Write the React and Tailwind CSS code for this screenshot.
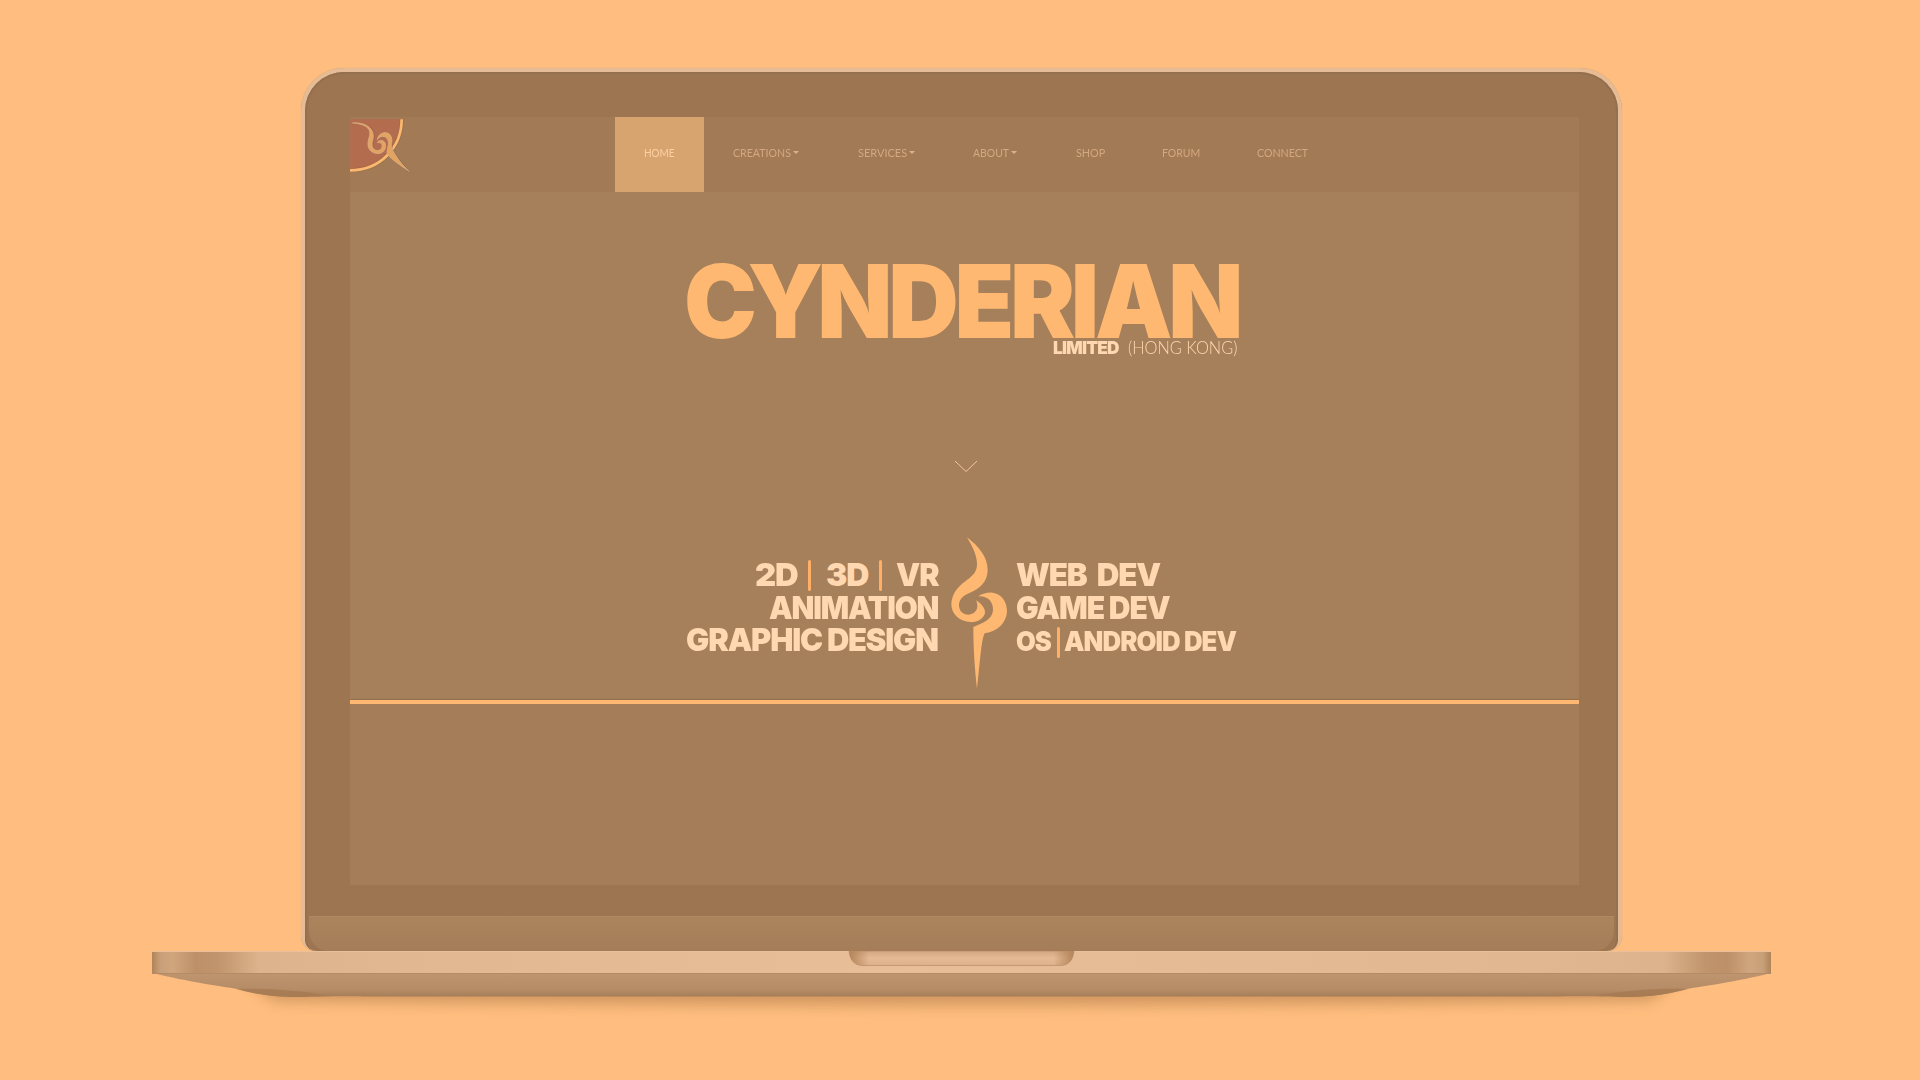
import React, { useLayoutEffect, useRef } from "react";

/* Text stretched horizontally so that its box takes exactly `width` pixels. */
function Fit({ width, className = "", children }) {
  const ref = useRef(null);
  useLayoutEffect(() => {
    const el = ref.current;
    el.style.transform = `scaleX(${width / el.offsetWidth})`;
  }, [width]);
  return (
    <span className="block shrink-0" style={{ width }}>
      <span ref={ref} className={`inline-block origin-left whitespace-pre ${className}`}>
        {children}
      </span>
    </span>
  );
}

function Logo() {
  return (
    <svg className="h-[55px] w-[60px] shrink-0" viewBox="180 170 180 165">
      <path d="M180 177H334C334 262 270 328 180 328Z" fill="#b36c4e" />
      <path d="M335 177C335 262 270 330 180 330" fill="none" stroke="#8f5f3c" strokeWidth="13" opacity=".35" />
      <path d="M335 177C335 262 270 330 180 330" fill="none" stroke="#fbb96f" strokeWidth="8" />
      <g stroke="#8b5738" strokeWidth="6" opacity=".35" fill="none">
        <path d="M187 190C215 183 250 200 252 225C252 240 244 250 250 265C257 276 275 272 279 260M304 234C310 249 300 259 308 274C320 294 340 312 356 334" />
      </g>
      <g fill="#e3a361" stroke="#dbb089" strokeWidth="2" strokeLinejoin="round">
        <path d="M187 188C218 183 250 200 250 225C251 240 242 250 249 263C256 274 273 272 276 260C278 250 272 246 262 247C264 239 279 237 285 247C291 263 282 280 262 280C240 278 232 262 234 246C236 230 243 222 237 208C228 193 205 190 187 188Z" />
        <path d="M262 238C265 214 297 209 304 230C310 245 300 255 308 270C318 290 336 312 357 333C334 316 306 300 291 280C289 268 300 250 293 238C287 225 270 225 262 238Z" />
      </g>
    </svg>
  );
}

function Flame() {
  return (
    <svg className="ml-[14px] mr-[8px] mt-[8px] h-[152px] w-[57px] shrink-0" viewBox="65 290 171 456" fill="#ffb871">
      <path d="M113 291C150 320 175 350 175 390C174 425 152 445 120 458C98 467 88 480 89 497C91 515 103 523 118 523C134 522 143 512 144 498C144 491 142 485 141 480C158 492 168 505 167 517C164 534 146 545 124 545C92 545 66 522 66 492C67 462 84 440 106 424C128 408 142 397 143 374C144 346 129 318 113 291Z" />
      <path d="M147 468C160 459 175 456 190 457C216 460 233 484 233 512C232 545 208 573 166 579C155 600 151 680 143 745C137 690 132 630 132 560C160 548 188 540 191 510C192 488 180 467 147 468Z" />
    </svg>
  );
}

const NAV = [
  { label: "CREATIONS", width: 58, caret: true, gap: "ml-[29px]" },
  { label: "SERVICES", width: 49, caret: true, gap: "ml-[58.5px]" },
  { label: "ABOUT", width: 36, caret: true, gap: "ml-[58px]" },
  { label: "SHOP", width: 29, gap: "ml-[59px]" },
  { label: "FORUM", width: 38, gap: "ml-[57px]" },
  { label: "CONNECT", width: 51, gap: "ml-[57.5px]" },
];

function Nav() {
  return (
    <nav className="flex h-[74.5px] shrink-0 bg-[#a27a55] font-['Lato',sans-serif] text-[11.9px] leading-[16px] text-[#d4a881]">
      <Logo />
      <div className="ml-[205px] flex w-[89px] items-center justify-center bg-[#d7a46f] pb-[3px] text-[#fdd0a3]">
        <Fit width={31}>HOME</Fit>
      </div>
      {NAV.map((item) => (
        <div key={item.label} className={`flex items-center pb-[3px] ${item.gap}`}>
          <Fit width={item.width}>{item.label}</Fit>
          {item.caret && (
            <span className="ml-[2px] border-x-[3px] border-t-[3px] border-x-transparent border-t-[#dcb18a]" />
          )}
        </div>
      ))}
    </nav>
  );
}

function Bar() {
  return <span className="h-[31px] w-[3px] shrink-0 rounded-full bg-[#ffb066]" />;
}

function Services() {
  return (
    <div className="mr-[5px] flex h-[171px] justify-center font-['Inter',sans-serif] text-[32px] font-[900] leading-[32.6px] tracking-[-1.2px] text-[#ffd7b0]">
      <div className="mr-[-1px] flex w-[252px] flex-col items-end pt-[30px]">
        <div className="flex h-[32.6px] items-center">
          <Fit width={42}>2D</Fit>
          <span className="w-[11px]" />
          <Bar />
          <span className="w-[15px]" />
          <Fit width={42}>3D</Fit>
          <span className="w-[11px]" />
          <Bar />
          <span className="w-[14px]" />
          <Fit width={42}>VR</Fit>
        </div>
        <Fit width={169}>ANIMATION</Fit>
        <Fit width={252}>GRAPHIC DESIGN</Fit>
      </div>
      <Flame />
      <div className="flex w-[222px] flex-col pt-[30px]">
        <Fit width={144}>WEB  DEV</Fit>
        <Fit width={153}>GAME DEV</Fit>
        <div className="flex h-[36px] items-center text-[27px] tracking-[-1px]">
          <Fit width={35}>OS</Fit>
          <span className="w-[6px]" />
          <Bar />
          <span className="w-[4px]" />
          <Fit width={172}>ANDROID DEV</Fit>
        </div>
      </div>
    </div>
  );
}

function Screen() {
  return (
    <div className="flex h-[768px] w-[1229px] flex-col overflow-hidden bg-[#a6805a]">
      <Nav />
      <div className="flex flex-col pl-[334px] pt-[72.5px]">
        <h1 className="h-[75px] font-['Inter',sans-serif] text-[102px] font-[900] leading-[75px] tracking-[-4.5px] text-[#ffb871]">
          <Fit width={555}><span className="tracking-[-10px]">C</span><span className="tracking-[-6px]">Y</span>NDERIAN</Fit>
        </h1>
        <div className="ml-[369px] mt-[-1px] flex h-[18px] items-center text-[18px] leading-[18px] text-[#ffd7b0]">
          <Fit width={66} className="font-['Inter',sans-serif] font-[900] tracking-[-0.8px]">LIMITED</Fit>
          <span className="w-[9px]" />
          <Fit width={109} className="font-['Lato',sans-serif] font-[300]">(HONG KONG)</Fit>
        </div>
      </div>
      <svg className="ml-[604px] mt-[104px] h-[13px] w-[24px] shrink-0" viewBox="0 0 24 13" fill="none" stroke="#f0c79f" strokeWidth="1">
        <path d="M1 1L12 11.5L23 1" />
      </svg>
      <div className="mt-[56px] w-[1229px]">
        <Services />
      </div>
      <div className="mt-auto h-[187px] shrink-0 border-t-[4px] border-[#ffb871] bg-[#a57d58] shadow-[0_-1px_1px_#94704f]" />
    </div>
  );
}

function Base() {
  return (
    <svg className="h-[80px] w-[1620px]" viewBox="152 951 1620 80">
      <defs>
        <linearGradient id="edge">
          <stop offset="0" stopColor="#b18358" />
          <stop offset=".005" stopColor="#c79f78" />
          <stop offset=".013" stopColor="#d0a67e" />
          <stop offset=".027" stopColor="#bd9068" />
          <stop offset=".04" stopColor="#c0946d" />
          <stop offset=".066" stopColor="#dcb38c" />
          <stop offset=".15" stopColor="#e1b792" />
          <stop offset=".45" stopColor="#e8be98" />
          <stop offset=".85" stopColor="#e1b792" />
          <stop offset=".934" stopColor="#dcb38c" />
          <stop offset=".96" stopColor="#c0946d" />
          <stop offset=".973" stopColor="#bd9068" />
          <stop offset=".987" stopColor="#d0a67e" />
          <stop offset=".995" stopColor="#c79f78" />
          <stop offset="1" stopColor="#b18358" />
        </linearGradient>
        <linearGradient id="under" x2="0" y2="1">
          <stop offset="0" stopColor="#bf956f" />
          <stop offset=".7" stopColor="#b58c66" />
          <stop offset="1" stopColor="#a47c57" />
        </linearGradient>
        <linearGradient id="notch" x2="0" y2="1">
          <stop offset="0" stopColor="#d3a680" />
          <stop offset=".5" stopColor="#e5ba94" />
          <stop offset="1" stopColor="#dcb08a" />
        </linearGradient>
        <linearGradient id="notchSide">
          <stop offset="0" stopColor="#b3845b" />
          <stop offset=".09" stopColor="#b3845b" stopOpacity="0" />
          <stop offset=".91" stopColor="#b3845b" stopOpacity="0" />
          <stop offset="1" stopColor="#b3845b" />
        </linearGradient>
        <filter id="soft" x="-5%" y="-100%" width="110%" height="300%">
          <feGaussianBlur stdDeviation="7" />
        </filter>
      </defs>
      <path d="M240 976H1684L1650 1001Q960 1010 274 1001Z" fill="#c28a55" opacity=".75" filter="url(#soft)" />
      <path d="M153 973H1771C1735 982 1705 986 1686 989C1665 996 1640 997 1620 997C1600 997 1595 996 1560 996.500H364C329 996 324 997 304 997C284 997 259 996 238 989C219 986 189 982 153 973Z" fill="url(#under)" />
      <path d="M236 989C270 988 300 991 325 995C290 999 262 996 236 989ZM1688 989C1654 988 1624 991 1599 995C1634 999 1662 996 1688 989Z" fill="#a67b53" opacity=".8" />
      <path d="M152 951H1771V973H152Z" fill="url(#edge)" />
      <path d="M152 951.500H1771" stroke="#e9c09a" />
      <path d="M152 973.500H1771" stroke="#b58b66" />
      <path d="M849 951H1074C1073 961 1068 965.500 1060 965.500H863C855 965.500 850 961 849 951Z" fill="url(#notch)" />
      <path d="M849 951H1074C1073 961 1068 965.500 1060 965.500H863C855 965.500 850 961 849 951Z" fill="url(#notchSide)" stroke="#b98c65" strokeWidth=".7" />
    </svg>
  );
}

export default function App() {
  return (
    <main className="flex h-[1080px] w-[1920px] flex-col overflow-hidden bg-[#ffbe7f] pt-[68px]">
      <div className="ml-[301px] h-[883px] w-[1321px] shrink-0 rounded-b-[15px] rounded-t-[43px] border-x-[4px] border-t-[4px] border-[#e5bc95] bg-[#9d7550] shadow-[0_0_1px_#c59668]">
        <div className="flex h-full flex-col overflow-hidden rounded-b-[11px] rounded-t-[39px] border-x-[2px] border-t-[2px] border-[#94704e]">
          <div className="ml-[43px] mt-[43px]">
            <Screen />
          </div>
          <div className="mx-[2px] mt-auto h-[35px] rounded-b-[20px] border-t border-[#b18761] bg-linear-to-b from-[#ab835d] to-[#a57d58]" />
        </div>
      </div>
      <div className="relative ml-[152px]">
        <Base />
      </div>
    </main>
  );
}
